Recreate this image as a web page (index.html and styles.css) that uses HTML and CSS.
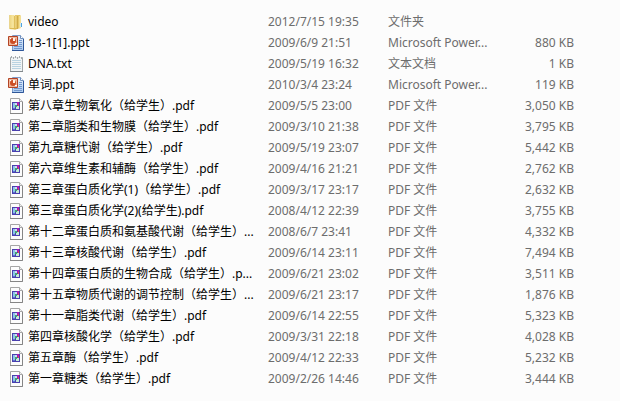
FILE: index.html
```html
<!DOCTYPE html>
<html lang="zh-CN">
<head>
  <meta charset="UTF-8">
  <meta name="viewport" content="width=device-width, initial-scale=1.0">
  <title>文件列表</title>
  <link rel="stylesheet" href="styles.css">
</head>
<body>
  <!-- 图标 -->
  <svg class="sprite" width="0" height="0" aria-hidden="true">
    <defs>
      <linearGradient id="gold" x1="0" x2="1" y1="0" y2="0">
        <stop offset="0" stop-color="#ecd27a"/>
        <stop offset="0.5" stop-color="#f7e6a0"/>
        <stop offset="1" stop-color="#e3c365"/>
      </linearGradient>
      <linearGradient id="blue" x1="0" x2="0" y1="0" y2="1">
        <stop offset="0" stop-color="#e9f2fc"/>
        <stop offset="1" stop-color="#a9c9ef"/>
      </linearGradient>
    </defs>
    <symbol id="icon-folder" viewBox="0 0 16 16">
      <path d="M7 1h5l1 1v12l-4 1H7z" fill="#e6c768"/>
      <path d="M11 2h2v12h-2z" fill="#f3de92"/>
      <path d="M12 9h2v4h-2z" fill="#d5e8ee"/>
      <path d="M13 9h1v4h-1z" fill="#4fa5dd"/>
      <path d="M1 1h5l1 1h2v13l-2 1-6-1z" fill="url(#gold)"/>
      <path d="M1.500 1v14" stroke="#ead58e" fill="none"/>
      <path d="M6.500 2v13" stroke="#e0bf5c" fill="none"/>
      <path d="M9.500 2v13" stroke="#d0ab48" fill="none"/>
      <path d="M2 14.500h7" stroke="#dcb954" fill="none"/>
    </symbol>
    <symbol id="icon-ppt" viewBox="0 0 16 16">
      <path d="M4.500.500h8l3 3v12h-11z" fill="url(#blue)" stroke="#7f9cc8"/>
      <path d="M15.500 4v11.500H4" stroke="#2f5799" fill="none"/>
      <path d="M12.500.500v3h3" fill="#fff" stroke="#6f8fbd"/>
      <path d="M11 5.500h3M11 7.500h3M11 9.500h3M6 11.500h8M6 13.500h8" stroke="#7298cf"/>
      <path d="M.500 1.500h9v9h-9z" fill="#f0b79c" stroke="#b34425"/>
      <circle cx="5" cy="6" r="3" fill="#cc4e26"/>
      <path d="M5 6V3h2v3z" fill="#fff2e8"/>
      <path d="M2 3h1v1H2zM7 8h2v1H7z" fill="#fff"/>
    </symbol>
    <symbol id="icon-txt" viewBox="0 0 16 16">
      <path d="M2.500 1.500h12v14h-12z" fill="#f1f4f5" stroke="#a2a8ab"/>
      <path d="M4 4.500h9M4 6.500h9M4 8.500h9M4 10.500h9M4 12.500h9" stroke="#b9d3e2"/>
      <path d="M3 1.500h11" stroke="#e4e6e7"/>
      <path d="M3.500 0v2M5.500 1v2M7.500 0v2M9.500 1v2M11.500 0v2M13.500 1v2" stroke="#a6abae"/>
      <path d="M2 15.500h13" stroke="#82888c"/>
    </symbol>
    <symbol id="icon-pdf" viewBox="0 0 16 16">
      <path d="M2.500.500h9l3 3v12h-12z" fill="#fcfcfc" stroke="#a5a5a5"/>
      <path d="M14.500 4v11.500H2" stroke="#858585" fill="none"/>
      <path d="M11.500.500v3h3" fill="#eee" stroke="#a8a8a8"/>
      <path d="M4 4h8v8H4z" fill="#4a3fae"/>
      <path d="M5 5h2v6H5z" fill="#8cc5e9"/>
      <path d="M7 5h2v2H7z" fill="#d3d9f4"/>
      <path d="M9 4h2v3H9z" fill="#a51bb5"/>
      <path d="M10 6h1v2h-1z" fill="#e53c62"/>
      <path d="M7 7h2v2H7z" fill="#43a66b"/>
      <path d="M9 8h2v3H8V9h1z" fill="#c5ecd5"/>
      <path d="M5 10h2v1H5z" fill="#5a76cf"/>
    </symbol>
  </svg>

  <table class="files">
    <colgroup>
      <col class="col-name">
      <col class="col-date">
      <col class="col-type">
      <col class="col-size">
      <col>
    </colgroup>
    <tbody id="file-rows"></tbody>
  </table>

  <script src="files.js"></script>
</body>
</html>
```
FILE: styles.css
```css
body {
  margin: 0;
  padding: 11px 0 12px 8px;
  background-color: #fcfcfc;
  font-family: "Noto Sans", "Noto Sans CJK SC", sans-serif;
  font-size: 12px;
  line-height: 21px;
  color: #6d6d6d;
}
.sprite {
  display: block;
}
.files {
  width: 100%;
  table-layout: fixed;
  border-collapse: collapse;
}
.col-name {
  width: 260px;
}
.col-date {
  width: 120px;
}
.col-type {
  width: 116px;
}
.col-size {
  width: 70px;
}
.files td {
  height: 21px;
  padding: 0;
  white-space: nowrap;
}
.name {
  display: flex;
  align-items: center;
  gap: 4px;
  color: #000;
}
.icon {
  flex: none;
  width: 16px;
  height: 16px;
}
.size {
  text-align: right;
}
```
FILE: files.js
```js
const files = [
  ['folder', 'video', '2012/7/15 19:35', '文件夹', ''],
  ['ppt', '13-1[1].ppt', '2009/6/9 21:51', 'Microsoft Power...', '880 KB'],
  ['txt', 'DNA.txt', '2009/5/19 16:32', '文本文档', '1 KB'],
  ['ppt', '单词.ppt', '2010/3/4 23:24', 'Microsoft Power...', '119 KB'],
  ['pdf', '第八章生物氧化（给学生）.pdf', '2009/5/5 23:00', 'PDF 文件', '3,050 KB'],
  ['pdf', '第二章脂类和生物膜（给学生）.pdf', '2009/3/10 21:38', 'PDF 文件', '3,795 KB'],
  ['pdf', '第九章糖代谢（给学生）.pdf', '2009/5/19 23:07', 'PDF 文件', '5,442 KB'],
  ['pdf', '第六章维生素和辅酶（给学生）.pdf', '2009/4/16 21:21', 'PDF 文件', '2,762 KB'],
  ['pdf', '第三章蛋白质化学(1)（给学生）.pdf', '2009/3/17 23:17', 'PDF 文件', '2,632 KB'],
  ['pdf', '第三章蛋白质化学(2)(给学生).pdf', '2008/4/12 22:39', 'PDF 文件', '3,755 KB'],
  ['pdf', '第十二章蛋白质和氨基酸代谢（给学生）...', '2008/6/7 23:41', 'PDF 文件', '4,332 KB'],
  ['pdf', '第十三章核酸代谢（给学生）.pdf', '2009/6/14 23:11', 'PDF 文件', '7,494 KB'],
  ['pdf', '第十四章蛋白质的生物合成（给学生）.p...', '2009/6/21 23:02', 'PDF 文件', '3,511 KB'],
  ['pdf', '第十五章物质代谢的调节控制（给学生）...', '2009/6/21 23:17', 'PDF 文件', '1,876 KB'],
  ['pdf', '第十一章脂类代谢（给学生）.pdf', '2009/6/14 22:55', 'PDF 文件', '5,323 KB'],
  ['pdf', '第四章核酸化学（给学生）.pdf', '2009/3/31 22:18', 'PDF 文件', '4,028 KB'],
  ['pdf', '第五章酶（给学生）.pdf', '2009/4/12 22:33', 'PDF 文件', '5,232 KB'],
  ['pdf', '第一章糖类（给学生）.pdf', '2009/2/26 14:46', 'PDF 文件', '3,444 KB']
];

document.getElementById('file-rows').innerHTML = files.map(([icon, name, date, type, size]) => `
  <tr>
    <td>
      <div class="name">
        <svg class="icon" aria-hidden="true"><use href="#icon-${icon}"/></svg>
        <span>${name}</span>
      </div>
    </td>
    <td>${date}</td>
    <td>${type}</td>
    <td class="size">${size}</td>
    <td></td>
  </tr>`).join('');
```
